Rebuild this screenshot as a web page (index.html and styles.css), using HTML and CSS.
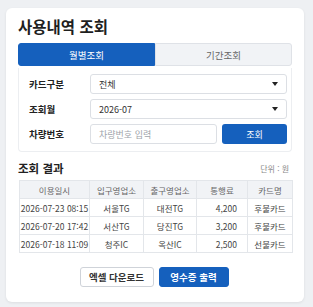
FILE: index.html
```html
<!DOCTYPE html>
<html lang="ko">
<head>
    <meta charset="UTF-8">
    <meta name="viewport" content="width=device-width, initial-scale=1.0">
    <title>사용내역 조회</title>
    <link rel="stylesheet" href="styles.css">
</head>
<body>
    <div class="card">
        <h1 class="title">사용내역 조회</h1>
        <div class="tabs">
            <div class="tab active">월별조회</div>
            <div class="tab">기간조회</div>
        </div>
        <div class="panel">
            <div class="row">
                <span class="label">카드구분</span>
                <div class="select"><span>전체</span><span class="caret"></span></div>
            </div>
            <div class="row">
                <span class="label">조회월</span>
                <div class="select"><span>2026-07</span><span class="caret"></span></div>
            </div>
            <div class="row">
                <span class="label">차량번호</span>
                <div class="input">차량번호 입력</div>
                <button class="btn-search">조회</button>
            </div>
        </div>
        <div class="result-head">
            <h2>조회 결과</h2>
            <span class="unit">단위 : 원</span>
        </div>
        <table class="result">
            <colgroup>
                <col style="width:70px">
                <col style="width:54px">
                <col style="width:53px">
                <col style="width:51px">
                <col>
            </colgroup>
            <thead>
                <tr><th>이용일시</th><th>입구영업소</th><th>출구영업소</th><th>통행료</th><th>카드명</th></tr>
            </thead>
            <tbody>
                <tr><td>2026-07-23 08:15</td><td>서울TG</td><td>대전TG</td><td class="num">4,200</td><td>후불카드</td></tr>
                <tr><td>2026-07-20 17:42</td><td>서산TG</td><td>당진TG</td><td class="num">3,200</td><td>후불카드</td></tr>
                <tr><td>2026-07-18 11:09</td><td>청주IC</td><td>옥산IC</td><td class="num">2,500</td><td>선불카드</td></tr>
            </tbody>
        </table>
        <div class="actions">
            <button class="btn-outline">엑셀 다운로드</button>
            <button class="btn-primary">영수증 출력</button>
        </div>
    </div>
</body>
</html>
```
FILE: styles.css
```css
body {
    margin: 0;
    padding: 8px 9px 5px 6px;
    background: #eef0f3;
    font-family: "Noto Sans CJK KR", "Noto Sans", sans-serif;
    color: #222;
}
.card {
    width: 298px;
    height: 294px;
    box-sizing: border-box;
    background: #fff;
    border-radius: 6px;
    box-shadow: 0 1px 3px rgba(0, 0, 0, 0.08);
    padding: 8px 12px 0 12px;
}
.title {
    margin: 0;
    font-size: 15.5px;
    line-height: 20px;
    font-weight: 700;
    color: #1f1f1f;
}
.tabs {
    display: flex;
    margin-top: 7px;
    height: 23px;
}
.tab {
    flex: 1;
    display: flex;
    align-items: center;
    justify-content: center;
    font-size: 9.5px;
    color: #666;
    background: #f1f3f6;
    border: 1px solid #dfe2e7;
    border-radius: 0 3px 3px 0;
}
.tab.active {
    background: #1560bd;
    border-color: #1560bd;
    color: #fff;
    border-radius: 3px 0 0 3px;
}
.panel {
    margin-top: 2px;
    padding: 6px 4px 7px 10px;
    border: 1px solid #eceef1;
    border-top: none;
    border-radius: 0 0 4px 4px;
    display: flex;
    flex-direction: column;
    gap: 5px;
}
.row {
    display: flex;
    align-items: center;
    height: 20px;
}
.label {
    width: 61px;
    flex: none;
    font-size: 9.5px;
    font-weight: 700;
    color: #222;
}
.select, .input {
    flex: 1;
    height: 20px;
    box-sizing: border-box;
    border: 1px solid #dcdfe4;
    border-radius: 3px;
    display: flex;
    align-items: center;
    justify-content: space-between;
    padding: 0 8px;
    font-size: 9px;
    color: #333;
}
.input {
    color: #a0a4aa;
}
.caret {
    width: 0;
    height: 0;
    border-left: 3px solid transparent;
    border-right: 3px solid transparent;
    border-top: 4px solid #222;
}
.btn-search {
    width: 65px;
    height: 20px;
    margin-left: 5px;
    border: none;
    border-radius: 3px;
    background: #1560bd;
    color: #fff;
    font-family: inherit;
    font-size: 9px;
}
.result-head {
    display: flex;
    align-items: center;
    justify-content: space-between;
    height: 18px;
    margin-top: 7px;
    padding-right: 3px;
}
.result-head h2 {
    margin: 0;
    font-size: 11.5px;
    line-height: 18px;
    font-weight: 700;
}
.unit {
    font-size: 8px;
    color: #888;
}
.result {
    width: 274px;
    margin-top: 3px;
    margin-left: 1px;
    border-collapse: collapse;
    table-layout: fixed;
    font-size: 8.5px;
    line-height: 12px;
}
.result th, .result td {
    height: 17px;
    padding: 0;
    border: 1px solid #e3e6ea;
    text-align: center;
    white-space: nowrap;
    color: #444;
}
.result th {
    background: #f1f3f6;
    font-weight: 400;
    color: #666;
}
.result td.num {
    text-align: right;
    padding-right: 10px;
}
.actions {
    display: flex;
    justify-content: center;
    gap: 5px;
    margin-top: 14px;
    padding-right: 2px;
}
.actions button {
    height: 20px;
    border-radius: 3px;
    font-family: inherit;
    font-size: 9.5px;
    font-weight: 700;
}
.btn-outline {
    width: 74px;
    background: #fff;
    border: 1px solid #cfd3d9;
    color: #333;
}
.btn-primary {
    width: 70px;
    background: #1560bd;
    border: 1px solid #1560bd;
    color: #fff;
}
```
